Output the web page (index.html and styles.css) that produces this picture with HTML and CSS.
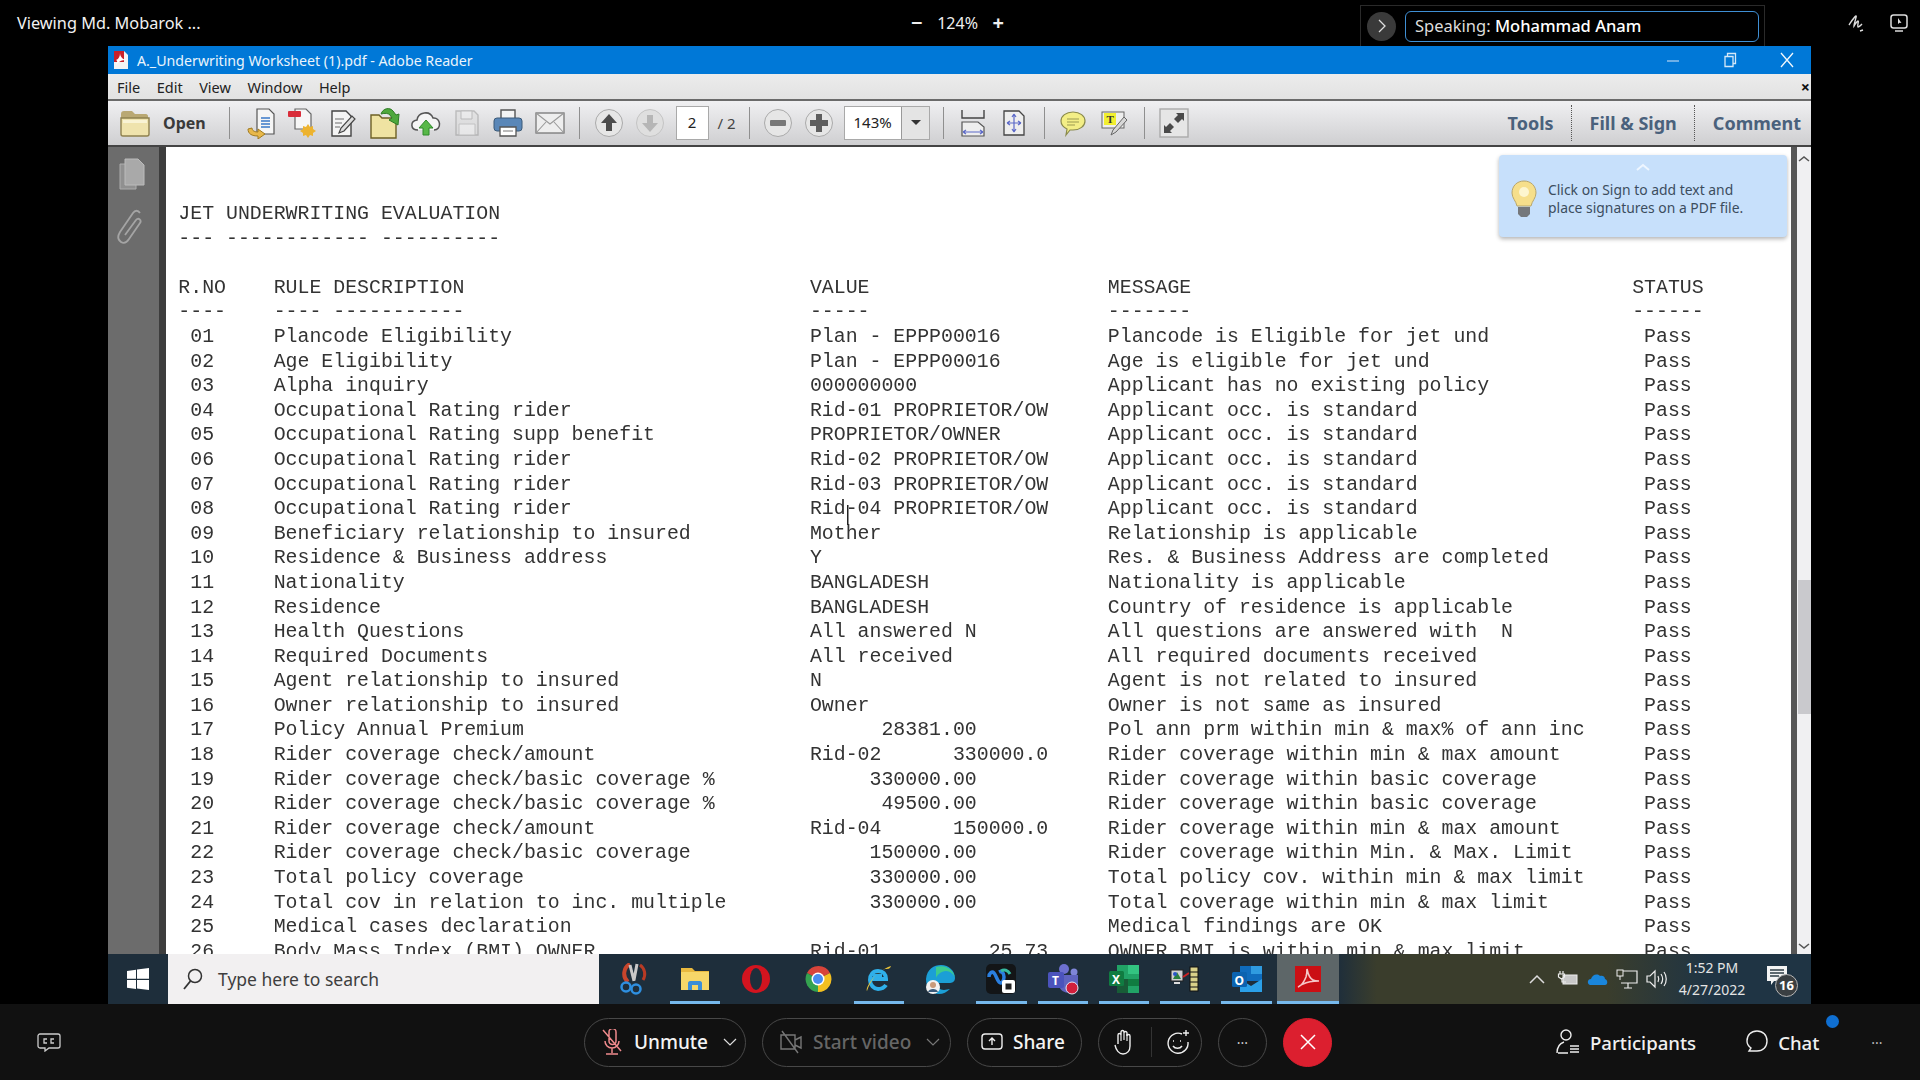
FILE: index.html
```html
<!DOCTYPE html>
<html lang="en">
<head>
<meta charset="utf-8">
<title>Viewing Md. Mobarok</title>
<link rel="stylesheet" href="styles.css">
</head>
<body>
<div class="app">
  <header class="topbar">
    <div class="viewing">Viewing Md. Mobarok ...</div>
    <div class="zoomctl"><span class="zc-btn">−</span><span>124%</span><span class="zc-btn">+</span></div>
    <div class="speaking">
      <span class="sp-circle"><svg width="10" height="16" viewBox="0 0 10 16"><path d="M2 2l6 6-6 6" fill="none" stroke="#ddd" stroke-width="1.3"/></svg></span>
      <div class="sp-box">Speaking: <b>Mohammad Anam</b></div>
    </div>
    <div class="top-icons">
      <svg width="22" height="22" viewBox="0 0 22 22"><path d="M3 13c2-3 5-8 7-9 1 0-2 7-2 10 2-3 3-5 4-5s-1 5 0 6c1 0 2-1 4-3M14 19l3-1" fill="none" stroke="#ddd" stroke-width="1.4"/></svg>
      <svg width="22" height="22" viewBox="0 0 22 22"><rect x="3" y="3" width="16" height="13" rx="2.5" fill="none" stroke="#ddd" stroke-width="1.5"/><path d="M7 19h8" stroke="#ddd" stroke-width="1.5"/><path d="M10 6v6l1.5-1.3 2 .2z" fill="#ddd"/></svg>
    </div>
  </header>

  <div class="stage">
    <section class="window">
      <div class="titlebar">
        <svg class="pdf-mini" width="20" height="20" viewBox="0 0 20 20"><path d="M3 1h10l4 4v14H3z" fill="#f4f4f4"/><path d="M3 1h10v11H3z" fill="#c8202a"/><path d="M5 10c3-1 4-4 4-7 0 3 2 6 6 7-4 0-7 1-10 5 1-3 2-4 0-5z" fill="#fff"/></svg>
        <span class="title-text">A._Underwriting Worksheet (1).pdf - Adobe Reader</span>
        <div class="win-ctl">
          <svg width="14" height="14" viewBox="0 0 14 14"><path d="M1 8h12" stroke="#9cc8ee" stroke-width="1.4"/></svg>
          <svg width="14" height="16" viewBox="0 0 14 16"><path d="M2 4.5h8v10H2zM4.5 4.5V1.5h8v10H10" fill="none" stroke="#d5e8f8" stroke-width="1.3"/></svg>
          <svg width="14" height="16" viewBox="0 0 14 16"><path d="M1 1l12 14M13 1L1 15" stroke="#f2f8fc" stroke-width="1.3"/></svg>
        </div>
      </div>
      <nav class="menubar">
        <span>File</span><span>Edit</span><span>View</span><span>Window</span><span>Help</span>
        <b class="menu-close">×</b>
      </nav>
      <div class="toolbar">
        <div class="tg tg-open">
          <svg width="32" height="30" viewBox="0 0 32 30"><path d="M2 6c0-2 1-3 3-3h8l3 3h11c1 0 2 1 2 2v3H2z" fill="#b9a873"/><path d="M2 26V10h28v16c0 1-1 2-2 2H4c-1 0-2-1-2-2z" fill="#efe3ad" stroke="#8f814f" stroke-width="1.4"/><path d="M4 12h24v3H4z" fill="#f9f3d4"/></svg>
          <span class="open-label">Open</span>
        </div>
        <div class="tg tg-file">
          <span class="tb"><svg width="30" height="32" viewBox="0 0 30 32"><path d="M11 2h12l5 5v20H11z" fill="#f5f5f5" stroke="#555" stroke-width="1.2"/><path d="M15 11h9M15 14h9M15 17h9M15 20h9" stroke="#3a78c8" stroke-width="1.6"/><path d="M2 22c0 5 4 7 10 7v3l7-5-7-5v3c-3 0-6-1-6-4z" fill="#e8b84a" stroke="#a07a20"/></svg></span>
          <span class="tb"><svg width="30" height="32" viewBox="0 0 30 32"><path d="M8 2h11l5 5v15H8z" fill="#f6f6f6" stroke="#666" stroke-width="1.2"/><rect x="1" y="4" width="13" height="6" rx="1" fill="#d92d3a"/><path d="M21 17l2 3 3-1 0 3 3 2-3 2 0 3-3-1-2 3-2-3-3 1 0-3-3-2 3-2 0-3 3 1z" fill="#edb32f"/></svg></span>
          <span class="tb"><svg width="28" height="32" viewBox="0 0 28 32"><path d="M3 4h14l5 5v20H3z" fill="#f4f4f4" stroke="#444" stroke-width="1.4"/><path d="M6 12h9M6 16h7M6 20h5" stroke="#999" stroke-width="1.3"/><path d="M10 26l2-5L23 9l3 3-11 12z" fill="#ddd" stroke="#444" stroke-width="1.2"/></svg></span>
          <span class="tb"><svg width="32" height="34" viewBox="0 0 32 34"><path d="M2 32V9h8l3 3h14v20z" fill="#efe3a2" stroke="#6d6025" stroke-width="1.4"/><path d="M12 8c2-6 9-7 12-3l3 4 3-1-1 11-9-5 3-2-2-3c-2-2-5-2-9-1z" fill="#4ea83d" stroke="#2e7b26"/></svg></span>
          <span class="tb"><svg width="32" height="30" viewBox="0 0 32 30"><path d="M8 22c-8 0-8-9-1-10 1-8 13-10 16-2 8-1 9 12 1 12" fill="#f5f5f5" stroke="#555" stroke-width="1.5"/><path d="M16 12l7 8h-4v7h-6v-7H9z" fill="#58b848" stroke="#2e8a2a"/></svg></span>
          <span class="tb"><svg width="26" height="28" viewBox="0 0 26 28" opacity=".55"><path d="M2 2h18l4 4v20H2z" fill="#ddd" stroke="#999" stroke-width="1.4"/><path d="M7 2h11v8H7z" fill="#eee" stroke="#999"/><path d="M5 15h16v11H5z" fill="#f4f4f4" stroke="#aaa"/></svg></span>
          <span class="tb"><svg width="30" height="30" viewBox="0 0 30 30"><path d="M8 2h14v9H8z" fill="#f4f4f4" stroke="#555" stroke-width="1.4"/><rect x="1" y="10" width="28" height="13" rx="3" fill="#5a87b8" stroke="#3c5a78"/><path d="M7 19h16v9H7z" fill="#fff" stroke="#555" stroke-width="1.3"/><path d="M10 23h10" stroke="#777"/></svg></span>
          <span class="tb"><svg width="30" height="24" viewBox="0 0 30 24"><rect x="1" y="2" width="28" height="20" fill="#eee" stroke="#777" stroke-width="1.3"/><path d="M1 2l14 11L29 2M1 22l10-11M29 22L19 11" fill="none" stroke="#999" stroke-width="1.1"/></svg></span>
        </div>
        <div class="tg tg-page">
          <span class="tb"><svg width="30" height="30" viewBox="0 0 30 30"><circle cx="15" cy="15" r="13.5" fill="#e6e6e6" stroke="#aaa"/><path d="M15 6l8 9h-5v8h-6v-8H7z" fill="#4c4c4c"/></svg></span>
          <span class="tb"><svg width="30" height="30" viewBox="0 0 30 30"><circle cx="15" cy="15" r="13.5" fill="#dfdfdf" stroke="#c4c4c4"/><path d="M15 24l-8-9h5V7h6v8h5z" fill="#b6b6b6"/></svg></span>
          <span class="pagebox">2</span><span class="pageof">/ 2</span>
        </div>
        <div class="tg tg-zoom">
          <span class="tb"><svg width="30" height="30" viewBox="0 0 30 30"><circle cx="15" cy="15" r="13.5" fill="#e6e6e6" stroke="#aaa"/><rect x="7" y="12" width="16" height="6" rx="1" fill="#777"/></svg></span>
          <span class="tb"><svg width="30" height="30" viewBox="0 0 30 30"><circle cx="15" cy="15" r="13.5" fill="#e6e6e6" stroke="#aaa"/><path d="M12 6h6v6h6v6h-6v6h-6v-6H6v-6h6z" fill="#5e5e5e"/></svg></span>
          <span class="zoombox"><span class="zb-val">143%</span><span class="zb-arrow"></span></span>
        </div>
        <div class="tg tg-fit">
          <span class="tb"><svg width="26" height="28" viewBox="0 0 26 28"><path d="M2 1v8h22V1" fill="none" stroke="#444" stroke-width="1.4"/><path d="M2 13h16l6 5v9H2z" fill="#eee" stroke="#555" stroke-width="1.2"/><path d="M3 23h20M3 23l3-2M3 23l3 2M23 23l-3-2M23 23l-3 2" stroke="#5b68c8" stroke-width="1.2" fill="none"/></svg></span>
          <span class="tb"><svg width="24" height="28" viewBox="0 0 24 28"><path d="M2 2h15l5 5v19H2z" fill="#eee" stroke="#444" stroke-width="1.3"/><path d="M12 5v18M5 14h14M12 5l-2 3M12 5l2 3M12 23l-2-3M12 23l2-3M5 14l3-2M5 14l3 2M19 14l-3-2M19 14l-3 2" stroke="#5b68c8" stroke-width="1.2" fill="none"/></svg></span>
        </div>
        <div class="tg tg-note">
          <span class="tb"><svg width="28" height="28" viewBox="0 0 28 28"><path d="M14 3c7 0 12 4 12 9s-5 9-12 9h-3l-4 5 1-6c-4-2-6-5-6-8 0-5 5-9 12-9z" fill="#f3ee86" stroke="#8a8a4c" stroke-width="1.2"/><path d="M8 10h12M8 13h12M8 16h8" stroke="#9c9a50" stroke-width="1.1"/></svg></span>
          <span class="tb"><svg width="28" height="28" viewBox="0 0 28 28"><rect x="2" y="3" width="22" height="16" fill="#eee" stroke="#666"/><rect x="4" y="4" width="12" height="12" fill="#f2ef2f"/><text x="6.5" y="14" class="svg-t">T</text><path d="M11 26l2-5 11-13 3 3-11 12z" fill="#d7d7d7" stroke="#666"/></svg></span>
        </div>
        <div class="tg tg-full">
          <span class="tb"><svg width="30" height="30" viewBox="0 0 30 30"><rect x="1" y="1" width="28" height="28" fill="#e6e6e6" stroke="#aaa" stroke-width="1.4"/><path d="M15 11l4-4-2-2h8v8l-2-2-4 4zM15 19l-4 4 2 2H5v-8l2 2 4-4z" fill="#4a4a4a"/></svg></span>
        </div>
        <div class="tabs">
          <span class="tab">Tools</span><span class="tab tab-dot">Fill &amp; Sign</span><span class="tab tab-dot">Comment</span>
        </div>
      </div>

      <main class="viewer">
        <aside class="rail">
          <svg width="26" height="32" viewBox="0 0 26 32"><path d="M1 6h16v25H1z" fill="#909090" stroke="#adadad"/><path d="M6 1h13l6 6v20H6z" fill="#a9a9a9" stroke="#bbb"/></svg>
          <svg class="clip" width="28" height="38" viewBox="0 0 28 38"><path d="M24 5c-2-3-5-3-7 0L4 24c-3 5-2 8 1 10s6 0 8-3L24 15c2-3-2-6-4-3L9 27" fill="none" stroke="#a4a4a4" stroke-width="1.800"/></svg>
        </aside>
        <div class="page">
          <div class="doc">
            <div class="line">JET UNDERWRITING EVALUATION</div>
            <div class="line">--- ------------ ----------</div>
            <div class="line">&nbsp;</div>
            <div class="row"><span>R.NO</span><span>RULE DESCRIPTION</span><span>VALUE</span><span>MESSAGE</span><span>STATUS</span></div>
            <div class="row"><span>----</span><span>---- -----------</span><span>-----</span><span>-------</span><span>------</span></div>
            <div class="row"><span> 01</span><span>Plancode Eligibility</span><span>Plan - EPPP00016</span><span>Plancode is Eligible for jet und</span><span> Pass</span></div>
            <div class="row"><span> 02</span><span>Age Eligibility</span><span>Plan - EPPP00016</span><span>Age is eligible for jet und</span><span> Pass</span></div>
            <div class="row"><span> 03</span><span>Alpha inquiry</span><span>000000000</span><span>Applicant has no existing policy</span><span> Pass</span></div>
            <div class="row"><span> 04</span><span>Occupational Rating rider</span><span>Rid-01 PROPRIETOR/OW</span><span>Applicant occ. is standard</span><span> Pass</span></div>
            <div class="row"><span> 05</span><span>Occupational Rating supp benefit</span><span>PROPRIETOR/OWNER</span><span>Applicant occ. is standard</span><span> Pass</span></div>
            <div class="row"><span> 06</span><span>Occupational Rating rider</span><span>Rid-02 PROPRIETOR/OW</span><span>Applicant occ. is standard</span><span> Pass</span></div>
            <div class="row"><span> 07</span><span>Occupational Rating rider</span><span>Rid-03 PROPRIETOR/OW</span><span>Applicant occ. is standard</span><span> Pass</span></div>
            <div class="row"><span> 08</span><span>Occupational Rating rider</span><span>Rid-04 PROPRIETOR/OW</span><span>Applicant occ. is standard</span><span> Pass</span></div>
            <div class="row"><span> 09</span><span>Beneficiary relationship to insured</span><span>Mother</span><span>Relationship is applicable</span><span> Pass</span></div>
            <div class="row"><span> 10</span><span>Residence &amp; Business address</span><span>Y</span><span>Res. &amp; Business Address are completed</span><span> Pass</span></div>
            <div class="row"><span> 11</span><span>Nationality</span><span>BANGLADESH</span><span>Nationality is applicable</span><span> Pass</span></div>
            <div class="row"><span> 12</span><span>Residence</span><span>BANGLADESH</span><span>Country of residence is applicable</span><span> Pass</span></div>
            <div class="row"><span> 13</span><span>Health Questions</span><span>All answered N</span><span>All questions are answered with  N</span><span> Pass</span></div>
            <div class="row"><span> 14</span><span>Required Documents</span><span>All received</span><span>All required documents received</span><span> Pass</span></div>
            <div class="row"><span> 15</span><span>Agent relationship to insured</span><span>N</span><span>Agent is not related to insured</span><span> Pass</span></div>
            <div class="row"><span> 16</span><span>Owner relationship to insured</span><span>Owner</span><span>Owner is not same as insured</span><span> Pass</span></div>
            <div class="row"><span> 17</span><span>Policy Annual Premium</span><span>      28381.00</span><span>Pol ann prm within min &amp; max% of ann inc</span><span> Pass</span></div>
            <div class="row"><span> 18</span><span>Rider coverage check/amount</span><span>Rid-02      330000.0</span><span>Rider coverage within min &amp; max amount</span><span> Pass</span></div>
            <div class="row"><span> 19</span><span>Rider coverage check/basic coverage %</span><span>     330000.00</span><span>Rider coverage within basic coverage</span><span> Pass</span></div>
            <div class="row"><span> 20</span><span>Rider coverage check/basic coverage %</span><span>      49500.00</span><span>Rider coverage within basic coverage</span><span> Pass</span></div>
            <div class="row"><span> 21</span><span>Rider coverage check/amount</span><span>Rid-04      150000.0</span><span>Rider coverage within min &amp; max amount</span><span> Pass</span></div>
            <div class="row"><span> 22</span><span>Rider coverage check/basic coverage</span><span>     150000.00</span><span>Rider coverage within Min. &amp; Max. Limit</span><span> Pass</span></div>
            <div class="row"><span> 23</span><span>Total policy coverage</span><span>     330000.00</span><span>Total policy cov. within min &amp; max limit</span><span> Pass</span></div>
            <div class="row"><span> 24</span><span>Total cov in relation to inc. multiple</span><span>     330000.00</span><span>Total coverage within min &amp; max limit</span><span> Pass</span></div>
            <div class="row"><span> 25</span><span>Medical cases declaration</span><span></span><span>Medical findings are OK</span><span> Pass</span></div>
            <div class="row"><span> 26</span><span>Body Mass Index (BMI) OWNER</span><span>Rid-01         25.73</span><span>OWNER BMI is within min &amp; max limit</span><span> Pass</span></div>
          </div>
          <span class="ibeam"></span>
          <div class="tip">
            <svg class="tip-chev" width="14" height="8" viewBox="0 0 14 8"><path d="M1 7l6-5 6 5" fill="none" stroke="#eef6ff" stroke-width="2"/></svg>
            <div class="tip-body">
              <svg width="26" height="38" viewBox="0 0 26 38"><path d="M13 1c7 0 12 5 12 12 0 5-4 8-5 13H6C5 21 1 18 1 13 1 6 6 1 13 1z" fill="#f6df8b" stroke="#b9a66a"/><circle cx="13" cy="12" r="5" fill="#fdf6cf"/><path d="M7 27h12v7l-3 3h-6l-3-3z" fill="#75787b"/></svg>
              <p>Click on Sign to add text and<br>place signatures on a PDF file.</p>
            </div>
          </div>
        </div>
        <div class="scroll">
          <svg class="sc-up" width="12" height="8" viewBox="0 0 12 8"><path d="M1 6l5-4 5 4" fill="none" stroke="#555" stroke-width="1.6"/></svg>
          <span class="thumb"></span>
          <svg class="sc-down" width="12" height="8" viewBox="0 0 12 8"><path d="M1 2l5 4 5-4" fill="none" stroke="#555" stroke-width="1.6"/></svg>
        </div>
      </main>

      <footer class="taskbar">
        <div class="start"><svg width="22" height="22" viewBox="0 0 22 22"><path d="M0 3l9-1.300v9H0zM10 1.500L22 0v10.700H10zM0 12h9v9L0 19.700zM10 12h12v10l-12-1.600z" fill="#fff"/></svg></div>
        <div class="search">
          <svg width="22" height="24" viewBox="0 0 22 24"><circle cx="13" cy="9" r="6.500" fill="none" stroke="#333" stroke-width="1.500"/><path d="M8.500 14L2 22" stroke="#333" stroke-width="1.800"/></svg>
          <span>Type here to search</span>
        </div>
        <div class="apps">
          <span class="app-i"><svg width="28" height="32" viewBox="0 0 28 32"><path d="M10 1a11 11 0 0 0-2 18" fill="none" stroke="#c8452c" stroke-width="4"/><path d="M20 2a11 11 0 0 1 3 15" fill="none" stroke="#b83a24" stroke-width="3"/><path d="M17 1l-3 16M10 2l4 16" stroke="#c9c9c9" stroke-width="3"/><circle cx="6" cy="24" r="4.500" fill="none" stroke="#2e8fe0" stroke-width="2.500"/><circle cx="16" cy="26" r="4.500" fill="none" stroke="#2e8fe0" stroke-width="2.500"/></svg></span>
          <span class="app-i on"><svg width="30" height="26" viewBox="0 0 30 26"><path d="M1 2h11l3 3h14v19H1z" fill="#e9b93e"/><path d="M1 6h28v18H1z" fill="#f7d768"/><path d="M8 24v-7c0-1 1-2 2-2h10c1 0 2 1 2 2v7h-4v-5h-6v5z" fill="#3b8ed8"/></svg></span>
          <span class="app-i"><svg width="30" height="30" viewBox="0 0 30 30"><ellipse cx="15" cy="15" rx="14" ry="14" fill="#d3141f"/><ellipse cx="15" cy="15" rx="6" ry="11" fill="#1e2e3b"/></svg></span>
          <span class="app-i"><svg width="30" height="30" viewBox="0 0 30 30"><path d="M15 15L4 9A13 13 0 0 1 27 9z" fill="#d8443a"/><path d="M15 15L27 9A13 13 0 0 1 15 28z" fill="#f4c020"/><path d="M15 15L15 28A13 13 0 0 1 4 9z" fill="#34a350"/><circle cx="15" cy="15" r="6.500" fill="#fff"/><circle cx="15" cy="15" r="5" fill="#4a8df0"/></svg></span>
          <span class="app-i on"><svg width="30" height="30" viewBox="0 0 30 30"><path d="M5 15h17c0-5-3-8-8-8s-8 4-8 9 4 9 8 9c3 0 6-1 8-4M9 12h9" fill="none" stroke="#2fb0ea" stroke-width="4"/><path d="M3 27c-2-3 8-20 24-25-1 3-3 3-6 3C12 8 6 18 3 27z" fill="#e7c23a"/></svg></span>
          <span class="app-i"><svg width="32" height="32" viewBox="0 0 32 32"><path d="M2 16C3 6 10 2 17 2c8 0 14 6 14 13 0 4-3 5-6 5H12c0 4 4 7 8 7l6-1c-3 3-7 5-11 5C7 31 2 24 2 16z" fill="#1b9fd6"/><path d="M12 4c10-3 18 3 19 11-1-3-4-7-9-7S13 12 12 15z" fill="#3ccb8f"/><circle cx="9" cy="24" r="7" fill="#f2f2f2"/><circle cx="9" cy="22" r="3" fill="#c89a7a"/><path d="M4 29c1-4 9-4 10 0z" fill="#3a5a7a"/></svg></span>
          <span class="app-i on"><svg width="32" height="32" viewBox="0 0 32 32"><rect x="1" y="1" width="30" height="30" rx="5" fill="#131517"/><path d="M4 14c0-4 3-6 5-4s3 7 5 9 5 0 5-5-3-6-5-5" fill="none" stroke="#2a7fe0" stroke-width="3.500"/><path d="M16 8c3-2 7-1 9 3" fill="none" stroke="#36b9a0" stroke-width="3"/><rect x="17" y="17" width="13" height="13" rx="2" fill="#fff"/><rect x="20.500" y="20.500" width="6" height="6" fill="#222"/></svg></span>
          <span class="app-i on"><svg width="32" height="32" viewBox="0 0 32 32"><circle cx="17" cy="6" r="5" fill="#6d70cf"/><circle cx="27" cy="9" r="3.500" fill="#7f86d8"/><path d="M12 12h19v11c0 5-5 7-9 7s-10-3-10-8z" fill="#5f64bf"/><rect x="1" y="9" width="16" height="16" rx="2" fill="#4b53bc"/><text x="5" y="22" class="svg-b">T</text><circle cx="25" cy="25" r="6" fill="#d21f3c" stroke="#e9e9f5"/></svg></span>
          <span class="app-i on"><svg width="32" height="30" viewBox="0 0 32 30"><path d="M9 1h22v28H9z" fill="#21a366"/><path d="M20 1h11v9H20z" fill="#33c481"/><path d="M9 15h11v14H9z" fill="#185c37"/><path d="M20 15h11v7H20z" fill="#107c41"/><rect x="1" y="7" width="15" height="15" rx="1.500" fill="#107c41"/><text x="4" y="19.500" class="svg-b">X</text></svg></span>
          <span class="app-i on"><svg width="30" height="26" viewBox="0 0 30 26"><rect x="1" y="4" width="12" height="11" fill="#cfcfd2" stroke="#222"/><path d="M3 13l4-7 4 7z" fill="#2a7f3f"/><circle cx="5" cy="8" r="2" fill="#2a55c9"/><path d="M4 17h6" stroke="#ddd" stroke-width="2"/><path d="M13 11l6-4" stroke="#c22" stroke-width="2"/><rect x="20" y="1" width="8" height="24" fill="#d9d18a" stroke="#111"/><path d="M20 6h8M20 11h8M20 16h8M20 21h8" stroke="#111"/></svg></span>
          <span class="app-i on"><svg width="32" height="30" viewBox="0 0 32 30"><path d="M9 2h22v15H9z" fill="#0f6cbd"/><path d="M20 2h11v8H20z" fill="#2f9be0"/><path d="M9 15l11 7 11-7v13H9z" fill="#2ba0e8"/><rect x="1" y="8" width="15" height="15" rx="1.500" fill="#0b63b0"/><text x="3.500" y="20.500" class="svg-b">O</text></svg></span>
          <span class="app-i active"><svg width="26" height="26" viewBox="0 0 26 26"><rect width="26" height="26" fill="#cb0f14"/><path d="M3 21c3-1 6-5 8-10 1-3 1-7 1-8 1 5 2 9 6 11 2 1 4 1 6 1-6 0-12 1-16 3-3 1-4 3-5 3z" fill="none" stroke="#f6c8c8" stroke-width="1.600"/></svg></span>
        </div>
        <div class="tray">
          <span class="tray-i"><svg width="18" height="12" viewBox="0 0 18 12"><path d="M2 10l7-7 7 7" fill="none" stroke="#ddd" stroke-width="1.500"/></svg></span>
          <span class="tray-i"><svg width="21" height="20" viewBox="0 0 21 20"><rect x="6" y="6" width="14" height="9" fill="#c8c8c8" stroke="#eee"/><path d="M3 2v3M6 2v3M1.500 5h6v3l-3 2-3-2zM5 10v3h4" stroke="#eee" fill="none" stroke-width="1.200"/></svg></span>
          <span class="tray-i"><svg width="21" height="14" viewBox="0 0 21 14"><path d="M3 13c-3-1-3-6 1-6 1-4 6-6 9-3 3-1 5 1 5 3 3 1 3 6 0 6z" fill="#1a86dc"/></svg></span>
          <span class="tray-i"><svg width="22" height="22" viewBox="0 0 22 22"><path d="M7 3h14v12H5M8 20h8M12 15v5" fill="none" stroke="#eee" stroke-width="1.200"/><rect x="1" y="2" width="6" height="6" fill="#3a3d2c" stroke="#eee"/><path d="M4 8v4" stroke="#eee"/></svg></span>
          <span class="tray-i"><svg width="22" height="20" viewBox="0 0 22 20"><path d="M1 7h3l5-5v16l-5-5H1z" fill="none" stroke="#eee" stroke-width="1.200"/><path d="M12 7c1 2 1 4 0 6M15 5c2 3 2 7 0 10M18 3c3 4 3 10 0 14" fill="none" stroke="#eee" stroke-width="1.200"/></svg></span>
          <div class="clock"><span>1:52 PM</span><span>4/27/2022</span></div>
          <div class="notif">
            <svg width="22" height="22" viewBox="0 0 22 22"><path d="M1 1h20v15H8l-3 4v-4H1z" fill="#f4f4f4"/><path d="M4 5h14M4 8h14M4 11h9" stroke="#2e3d44" stroke-width="1.300"/></svg>
            <span class="badge">16</span>
          </div>
        </div>
      </footer>
    </section>
  </div>

  <footer class="meetbar">
    <svg class="cc" width="24" height="20" viewBox="0 0 24 20"><path d="M3 2h18a2 2 0 0 1 2 2v10a2 2 0 0 1-2 2H12l-4 3v-3H3a2 2 0 0 1-2-2V4a2 2 0 0 1 2-2z" fill="none" stroke="#ccc" stroke-width="1.300"/><path d="M10 7H7v4h3M17 7h-3v4h3" fill="none" stroke="#ccc" stroke-width="1.300"/></svg>
    <div class="controls">
      <div class="pill p-mute">
        <svg width="24" height="26" viewBox="0 0 24 26"><path d="M3 1l18 21M9 3a3.500 3.500 0 0 1 7 0v9a3.500 3.500 0 0 1-7 0zM5 12c0 4 3 7 7 7s7-3 7-7M12 19v5M6 25h12" fill="none" stroke="#f08a8d" stroke-width="1.500"/></svg>
        <span class="p-label">Unmute</span>
        <svg class="chev" width="14" height="9" viewBox="0 0 14 9"><path d="M1 1l6 6 6-6" fill="none" stroke="#ddd" stroke-width="1.200"/></svg>
      </div>
      <div class="pill p-video">
        <svg width="24" height="24" viewBox="0 0 24 24"><path d="M2 5h14v14H2zM16 10l6-3v11l-6-3M3 1l16 22" fill="none" stroke="#777" stroke-width="1.400"/></svg>
        <span class="p-label dim">Start video</span>
        <svg class="chev" width="14" height="9" viewBox="0 0 14 9"><path d="M1 1l6 6 6-6" fill="none" stroke="#777" stroke-width="1.200"/></svg>
      </div>
      <div class="pill p-share">
        <svg width="22" height="20" viewBox="0 0 22 20"><rect x="1" y="2" width="20" height="15" rx="3" fill="none" stroke="#eee" stroke-width="1.400"/><path d="M11 13V6M8 9l3-3 3 3" fill="none" stroke="#eee" stroke-width="1.400"/></svg>
        <span class="p-label">Share</span>
      </div>
      <div class="pill p-react">
        <svg width="20" height="26" viewBox="0 0 20 26"><path d="M5 15V6a1.500 1.500 0 0 1 3 0V3a1.500 1.500 0 0 1 3 0v1a1.500 1.500 0 0 1 3 0v3a1.500 1.500 0 0 1 3 0v10c0 5-3 8-7 8s-7-4-8-9" fill="none" stroke="#eee" stroke-width="1.400"/><path d="M8 6v6M11 4v7M14 5v7" stroke="#eee" stroke-width="1.200"/></svg>
        <i class="p-div"></i>
        <svg width="24" height="26" viewBox="0 0 24 26"><path d="M16 5a10 10 0 1 0 6 8" fill="none" stroke="#eee" stroke-width="1.400"/><path d="M7 12h1M14 12h1M7 17c2 3 7 3 9 0M20 1v6M17 4h6" fill="none" stroke="#eee" stroke-width="1.400"/></svg>
      </div>
      <div class="pill p-round">···</div>
      <div class="pill p-end"><svg width="18" height="18" viewBox="0 0 18 18"><path d="M2 2l14 14M16 2L2 16" stroke="#fff" stroke-width="1.500"/></svg></div>
    </div>
    <div class="right-ctl">
      <div class="rc">
        <svg width="26" height="28" viewBox="0 0 26 28"><circle cx="11" cy="7" r="5" fill="none" stroke="#eee" stroke-width="1.400"/><path d="M2 25c0-5 1-9 7-11M3 25h10M15 18h9M15 21h9M15 24h9" fill="none" stroke="#eee" stroke-width="1.400"/></svg>
        <span>Participants</span>
      </div>
      <div class="rc">
        <svg width="24" height="26" viewBox="0 0 24 26"><path d="M12 2c6 0 10 4 10 10s-4 10-10 10H4l2-3c-3-2-4-4-4-7C2 6 6 2 12 2z" fill="none" stroke="#eee" stroke-width="1.400"/></svg>
        <span>Chat</span>
        <i class="dot"></i>
      </div>
      <div class="rc-more">···</div>
    </div>
  </footer>
</div>
</body>
</html>
```
FILE: styles.css
```css
* { box-sizing: border-box; }
html, body { margin: 0; height: 100%; background: #000; overflow: hidden; }
body { font-family: "Noto Sans", "Open Sans", sans-serif; color: #fff; }
.app { width: 1920px; height: 1080px; display: grid; grid-template-rows: 46px 958px 76px; }

/* top bar */
.topbar { display: flex; align-items: center; background: #000; padding-left: 17px; position: relative; }
.viewing { width: 894px; font-size: 16.3px; color: #f2f2f2; }
.zoomctl { width: 93px; display: flex; justify-content: space-between; align-items: center; font-size: 16px; color: #eee; }
.zc-btn { font-weight: 700; font-size: 20px; line-height: 1; }
.speaking { margin-left: 356px; align-self: flex-end; width: 405px; height: 41px; border: 1px solid #2a2a2a; border-bottom: 0; display: flex; align-items: center; padding-left: 6px; gap: 9px; }
.sp-circle { width: 29px; height: 29px; border-radius: 50%; background: #3a3a3a; display: flex; align-items: center; justify-content: center; }
.sp-box { width: 354px; height: 31px; border: 1.5px solid #3f8fd4; border-radius: 6px; padding-left: 9px; line-height: 28px; font-size: 16.5px; color: #ddd; white-space: nowrap; }
.sp-box b { font-weight: 500; color: #fff; }
.top-icons { margin-left: 81px; display: flex; gap: 20px; }

/* window */
.stage { padding-left: 108px; background: #000; min-height: 0; }
.window { width: 1703px; height: 958px; display: flex; flex-direction: column; }
.titlebar { height: 28px; flex: none; background: #0078d7; display: flex; align-items: center; padding-left: 3px; }
.pdf-mini { flex: none; }
.title-text { margin-left: 6px; font-size: 14.2px; color: #eaf4fc; }
.win-ctl { margin-left: auto; display: flex; gap: 43px; align-items: center; padding-right: 17px; }
.menubar { height: 27px; flex: none; background: linear-gradient(#ececec, #e2e2e2); border-bottom: 2px solid #6a6a6a; display: flex; align-items: center; padding-left: 9px; gap: 16.500px; font-size: 14.5px; color: #222; position: relative; }
.menu-close { margin-left: auto; margin-right: 1px; color: #111; font-size: 16px; line-height: 1; }

.toolbar { height: 46px; flex: none; background: linear-gradient(#f0f0f2, #cfcfd1); border-bottom: 2px solid #444; display: flex; align-items: center; }
.tg { height: 32px; display: flex; align-items: center; border-right: 1px solid #8f8f8f; flex: none; }
.tg-open { width: 122px; padding-left: 11px; }
.tg-file { width: 350px; padding-left: 10px; }
.tg-page { width: 170px; padding-left: 8px; }
.tg-zoom { width: 194px; padding-left: 7px; }
.tg-fit { width: 101px; padding-left: 8px; }
.tg-note { width: 100px; padding-left: 7px; }
.tg-full { width: 100px; padding-left: 8px; border-right: 0; }
.open-label { margin-left: 12px; font-size: 16px; font-weight: 700; color: #3a3a3a; }
.tb { width: 41.3px; height: 34px; display: flex; align-items: center; justify-content: center; flex: none; }
.pagebox { width: 33px; height: 34px; margin-left: 5px; background: #fff; border: 1.5px solid #a9a9a9; text-align: center; line-height: 30px; font-size: 15px; color: #222; }
.pageof { margin-left: 9px; font-size: 15px; color: #444; white-space: nowrap; }
.zoombox { width: 86px; height: 34px; margin-left: 4px; background: #fff; border: 1.5px solid #a9a9a9; display: flex; font-size: 15px; color: #222; }
.zb-val { width: 56px; text-align: center; line-height: 30px; }
.zb-arrow { flex: 1; background: #e4e4e4; border-left: 1px solid #999; position: relative; }
.zb-arrow::after { content: ""; position: absolute; left: 9px; top: 13px; border: 5px solid transparent; border-top: 5px solid #333; border-bottom: 0; }
.tabs { margin-left: auto; display: flex; align-items: center; height: 36px; padding-right: 10px; }
.tab { font-size: 18px; font-weight: 700; color: #4a617c; padding-left: 18px; padding-right: 17px; line-height: 36px; white-space: nowrap; }
.tab:last-child { padding-right: 0; }
.tab-dot { border-left: 1px dotted #555; }

/* viewer */
.viewer { flex: 1; min-height: 0; display: flex; overflow: hidden; }
.rail { width: 58px; flex: none; background: #6c6c6c; border-right: 7px solid #3d3d3d; display: flex; flex-direction: column; align-items: center; padding: 11px 3px 0 0; gap: 18px; }
.clip { margin-left: -4px; }
.page { flex: 1; min-width: 0; background: #fff; position: relative; overflow: hidden; padding: 55px 0 0 12.3px; }
.doc { font-family: "Liberation Mono", monospace; font-size: 19.88px; line-height: 24.6px; color: #333; filter: blur(.35px); }
.line { white-space: pre; }
.row { display: grid; grid-template-columns: 8ch 45ch 25ch 44ch 1fr; }
.row span { white-space: pre; }
.ibeam { position: absolute; left: 678px; top: 358px; width: 7px; height: 20px; background: linear-gradient(#222,#222) center/1.500px 100% no-repeat; }
.tip { position: absolute; left: 1333px; top: 8px; width: 288px; height: 82px; background: #c7e0fb; border-radius: 4px; box-shadow: 0 2px 4px rgba(0,0,0,.3); }
.tip-chev { display: block; margin: 8px auto 0; }
.tip-body { display: flex; align-items: center; gap: 11px; padding: 9px 0 0 12px; }
.tip-body p { margin: 0; font-size: 13.9px; line-height: 18.500px; color: #3c4d5e; white-space: nowrap; }
.scroll { width: 20px; flex: none; background: #f0f0f2; border-left: 6px solid #565656; position: relative; display: flex; flex-direction: column; align-items: center; }
.sc-up { margin-top: 8px; }
.thumb { position: absolute; left: 1px; right: 0; top: 433px; height: 134px; background: #c9c9cd; }
.sc-down { margin-top: auto; margin-bottom: 4px; }

/* taskbar */
.taskbar { height: 50px; flex: none; display: flex; align-items: stretch; background: linear-gradient(90deg, #1e2e3b 0, #1e2e3b 72.2%, #3a3d2c 74.5%, #3a3d2c 88%, #1f3444 94%); }
.start { width: 60px; flex: none; display: flex; align-items: center; justify-content: center; }
.search { width: 431px; flex: none; background: #f2f0f1; display: flex; align-items: center; padding-left: 14px; gap: 14px; font-size: 17.5px; color: #3e3e3e; }
.apps { display: flex; margin-left: 4px; }
.app-i { width: 61.3px; display: flex; align-items: center; justify-content: center; position: relative; }
.app-i.on::after, .app-i.active::after { content: ""; position: absolute; bottom: 0; left: 5.500px; right: 5.500px; height: 3px; background: #76b9ed; }
.app-i.active { background: #5d6668; }
.app-i.active::after { left: 0; right: 0; }
.tray { margin-left: auto; display: flex; align-items: center; position: relative; padding-right: 17px; }
.tray-i { width: 30px; display: flex; justify-content: center; align-items: center; }
.clock { width: 80px; display: flex; flex-direction: column; align-items: center; font-size: 14px; line-height: 22px; color: #e4e4e4; white-space: nowrap; }
.notif { width: 42px; position: relative; height: 100%; padding: 11px 0 0 14px; }
.badge { position: absolute; left: 23px; top: 20px; width: 23px; height: 23px; border-radius: 50%; background: #3a3f42; border: 1.500px solid #b5b5b5; font-size: 13px; font-weight: 700; text-align: center; line-height: 20px; }
.svg-t { font: 700 11px "Liberation Serif", serif; fill: #333; }
.svg-b { font: 700 12px "Noto Sans", sans-serif; fill: #fff; }

/* meeting bar */
.meetbar { background: #111; display: flex; align-items: center; padding-left: 37px; position: relative; }
.cc { flex: none; }
.controls { margin-left: 523px; display: flex; gap: 16px; align-items: center; }
.pill { height: 49px; border: 1.500px solid #484848; border-radius: 25px; display: flex; align-items: center; flex: none; }
.p-mute { width: 162px; padding-left: 15px; }
.p-video { width: 189px; padding-left: 16px; }
.p-share { width: 115px; padding-left: 13px; }
.p-react { width: 104px; padding-left: 14px; }
.p-round { width: 49px; justify-content: center; font-size: 14px; color: #ccc; }
.p-end { width: 49px; background: #dc1f2f; border-color: #dc1f2f; justify-content: center; }
.p-label { margin-left: 10px; font-size: 19px; font-weight: 500; color: #f4f4f4; white-space: nowrap; }
.p-label.dim { color: #666; }
.chev { margin-left: 15px; }
.p-div { width: 1px; height: 30px; background: #333; margin: 0 14px 0 18px; }
.right-ctl { margin-left: 223px; display: flex; align-items: center; }
.rc { display: flex; align-items: center; gap: 9px; font-size: 18.6px; font-weight: 500; color: #f0f0f0; position: relative; }
.rc + .rc { margin-left: 49px; }
.dot { position: absolute; right: -20px; top: -14px; width: 13px; height: 13px; border-radius: 50%; background: #0f6fd2; }
.rc-more { margin-left: 52px; font-size: 14px; color: #bbb; }
```
